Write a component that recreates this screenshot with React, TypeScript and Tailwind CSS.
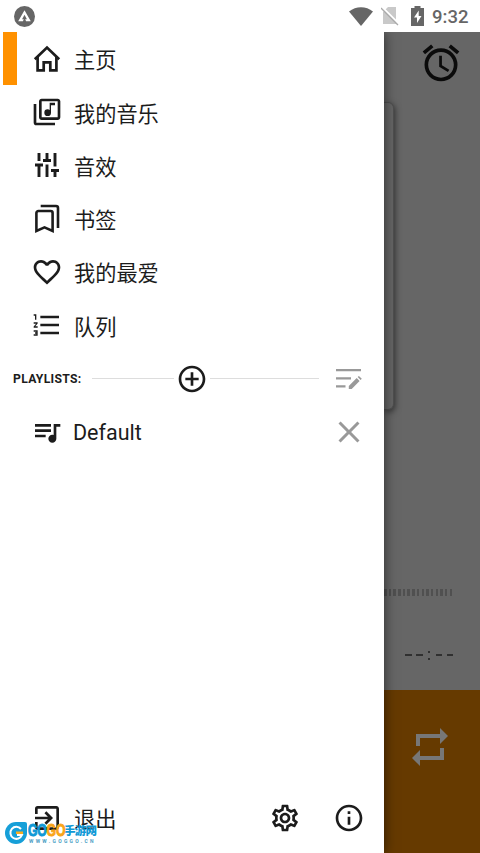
import React from "react";
import {
  MdOutlineLibraryMusic,
  MdFavoriteBorder,
  MdFormatListNumbered,
  MdQueueMusic,
  MdAddCircleOutline,
  MdOutlineSettings,
  MdInfoOutline,
  MdExitToApp,
  MdAlarm,
  MdClose,
} from "react-icons/md";

const HomeIcon = () => (
  <svg viewBox="0 0 32 32" className="h-8 w-8" fill="none" stroke="currentColor" strokeWidth="2.700">
    <path d="M3.800 16.300 16 4.600 28.200 16.300" />
    <path d="M6.600 14v13.300h6.100v-8h6.600v8h6.100V14" />
  </svg>
);

const SlidersIcon = () => (
  <svg viewBox="0 0 32 32" className="h-8 w-8" fill="none" stroke="currentColor" strokeWidth="2.900">
    <path d="M8 4v8M4 16h8M8 16v12M16 4v8M12 11.500h8M16 15.500V28M24 4v13.500M20 21.500h8M24 21.500V28" />
  </svg>
);

const BookmarksIcon = () => (
  <svg viewBox="0 0 32 32" className="h-8 w-8" fill="none" stroke="currentColor" strokeWidth="2.600">
    <path d="M5.400 28V10a2 2 0 0 1 2-2h12.200a2 2 0 0 1 2 2v18l-8.100-3.600z" />
    <path d="M9.700 3H25a2 2 0 0 1 2 2v20" />
  </svg>
);

const EditListIcon = () => (
  <svg viewBox="0 0 26 22" className="h-[22px] w-[26px]" fill="currentColor">
    <path d="M0 1h25v2.300H0zM0 9.200h15v2.300H0zM0 17.200h9.500v2.300H0z" />
    <path d="M12.800 18 20.700 10.100l2.900 2.900-7.900 7.900h-2.900zM21.700 9.100l1.200-1.200 2.900 2.900-1.200 1.200z" />
  </svg>
);

const items = [
  { label: "主页", icon: <HomeIcon />, active: true },
  { label: "我的音乐", icon: <MdOutlineLibraryMusic className="h-8 w-8" /> },
  { label: "音效", icon: <SlidersIcon /> },
  { label: "书签", icon: <BookmarksIcon /> },
  { label: "我的最爱", icon: <MdFavoriteBorder className="h-8 w-8" /> },
  { label: "队列", icon: <MdFormatListNumbered className="h-8 w-8" /> },
];

function StatusBar() {
  return (
    <header className="flex h-8 items-center justify-between bg-white pl-[14px] pr-[11px] text-[#666]">
      <svg viewBox="0 0 20 20" className="h-[21px] w-[21px]">
        <circle cx="10" cy="10" r="10" fill="#666" />
        <path d="M10 4 16 14.500h-4.500L10 11l-1.500 3.500H4z" fill="#fff" />
        <path d="m10 8.300 2.300 4.200H7.700z" fill="#666" />
      </svg>
      <div className="flex items-center">
        <svg viewBox="0 0 24 19" className="h-[19px] w-6" fill="#666">
          <path d="M0 4.500C7-1.200 17-1.200 24 4.500L12 19z" />
        </svg>
        <svg viewBox="0 0 18 20" className="ml-[8px] h-5 w-[18px]">
          <path d="M2 6 7 1h8v17H2z" fill="#c9c9c9" />
          <path d="m1 1 17 17" stroke="#fff" strokeWidth="2" />
          <path d="m0 2 17 17" stroke="#aaa" strokeWidth="1.300" />
        </svg>
        <svg viewBox="0 0 13 20" className="ml-3 h-5 w-[13px]">
          <path d="M0 2h3.500V0h6v2H13v18H0z" fill="#666" />
          <path d="M7.700 4.500 3 11.500h3V17l4.500-7H7.700z" fill="#fff" />
        </svg>
        <span className="ml-[8.500px] w-[37px] whitespace-nowrap pt-px text-[18.500px] font-medium leading-8">9:32</span>
      </div>
    </header>
  );
}

function Watermark() {
  return (
    <div className="absolute bottom-[9px] left-[5px] flex items-center">
      <svg viewBox="0 0 22 22" className="h-[22px] w-[22px]">
        <path d="M11 0h9a2 2 0 0 1 2 2v9A11 11 0 1 1 11 0z" fill="#169fd8" />
        <path d="M16 7a6 6 0 1 0 1 6h-5" fill="none" stroke="#fff" strokeWidth="2" />
        <path d="M11 9.500h7V12h-7z" fill="#f8ac22" />
      </svg>
      <div className="ml-[1px] flex w-[70px] flex-col">
        <div className="flex items-center whitespace-nowrap leading-[16px] text-[#1099d6]">
          <div className="w-[36px]">
            <div className="w-[50px] origin-left scale-x-[0.72] font-['Liberation_Sans',sans-serif] text-[17px] font-bold tracking-[-0.300px] [-webkit-text-stroke:1px_currentColor]">
              GO<span className="text-[#f9a51a]">GO</span>
            </div>
          </div>
          <span className="text-[11.500px] font-black tracking-[-0.700px]">手游网</span>
        </div>
        <span className="whitespace-nowrap pl-[1px] text-[5px] font-bold leading-[5px] tracking-[2.300px] text-[#4b9ec4]">WWW.GOGGO.CN</span>
      </div>
    </div>
  );
}

function Drawer() {
  return (
    <aside className="relative z-10 flex w-96 shrink-0 flex-col bg-white text-[#1c1c1c] shadow-[0_0_12px_rgba(0,0,0,0.6)]">
      <nav className="flex flex-col">
        {items.map((item) => (
          <div key={item.label} className="flex h-[53.300px] items-center pl-[3px]">
            <div className={item.active ? "h-full w-[13.500px] bg-[#ff9100]" : "h-full w-[13.500px]"} />
            <div className="ml-[14.500px]">{item.icon}</div>
            <span className="ml-[11px] pt-[5px] text-[21.200px]">{item.label}</span>
          </div>
        ))}
      </nav>
      <div className="flex h-[54px] items-center pl-[13px] pr-[22px]">
        <span className="w-[79px] whitespace-nowrap pt-px text-[12.200px] font-bold tracking-[0.300px]">PLAYLISTS:</span>
        <div className="h-px w-[82px] bg-[#ddd]" />
        <MdAddCircleOutline className="mx-[2px] h-8 w-8" />
        <div className="h-px w-[109px] bg-[#ddd]" />
        <div className="ml-auto text-[#999]">
          <EditListIcon />
        </div>
      </div>
      <div className="flex h-[53px] items-center pl-[31px] pr-[19.500px]">
        <MdQueueMusic className="h-8 w-8" />
        <span className="ml-[10px] pt-px text-[21.500px]">Default</span>
        <MdClose className="ml-auto h-9 w-9 -mr-[2px] text-[#999]" />
      </div>
      <footer className="mt-auto flex h-[70px] items-center pl-[31px] pr-[19px]">
        <MdExitToApp className="h-8 w-8" />
        <span className="ml-[11px] pt-[4px] text-[21.200px]">退出</span>
        <MdOutlineSettings className="ml-auto h-8 w-8" />
        <MdInfoOutline className="ml-[32px] h-8 w-8" />
      </footer>
      <Watermark />
    </aside>
  );
}

function Player() {
  return (
    <main className="flex min-w-0 flex-1 flex-col bg-[#666]">
      <div className="flex h-[70px] justify-end pr-[17px] pt-[9px] text-[#0b0b0b]">
        <MdAlarm className="h-11 w-11" />
      </div>
      <div className="h-[308px] w-[10px] rounded-r-[6px] border-y border-r border-[#505050] bg-[#666] shadow-[1px_2px_6px_rgba(0,0,0,0.5)]" />
      <div className="mt-[179px] flex h-[7px] gap-[2.200px] overflow-hidden">
        {Array.from({ length: 15 }, (_, i) => (
          <div key={i} className="w-[2.500px] shrink-0 bg-[#505050]" />
        ))}
      </div>
      <div className="mt-[49px] flex h-5 items-center pl-[21px] text-[#303030]">
        <div className="flex w-[48px] items-center justify-between">
          <div className="h-[1.500px] w-[6.500px] bg-current" />
          <div className="h-[1.500px] w-[6.500px] bg-current" />
          <div className="flex h-[9px] w-[4px] flex-col items-center justify-between">
            <div className="h-[2px] w-[2px] bg-current" />
            <div className="h-[2px] w-[2px] bg-current" />
          </div>
          <div className="h-[1.500px] w-[6.500px] bg-current" />
          <div className="h-[1.500px] w-[6.500px] bg-current" />
        </div>
      </div>
      <div className="mt-auto h-[163px] bg-[#663a00] pl-[28px] pt-[38px]">
        <svg viewBox="0 0 36 40" className="h-10 w-9" fill="#777">
          <path d="M4 6h24V0l8 8-8 8v-6H8v8H4zM32 32H8v6l-8-8 8-8v6h20v-8h4z" />
        </svg>
      </div>
    </main>
  );
}

export default function App() {
  return (
    <div className="flex h-[853px] w-[480px] flex-col overflow-hidden font-[Roboto,'Noto_Sans_CJK_SC',sans-serif]">
      <StatusBar />
      <div className="flex min-h-0 flex-1 overflow-hidden">
        <Drawer />
        <Player />
      </div>
    </div>
  );
}
